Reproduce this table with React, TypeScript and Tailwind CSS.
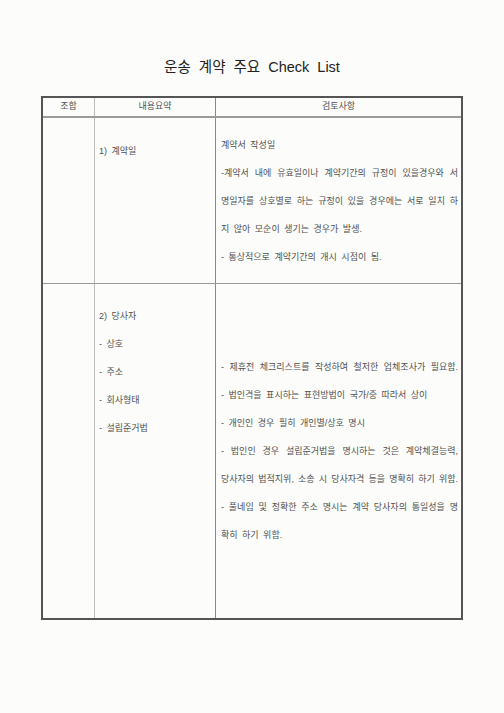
import React from 'react';

type Line = { text: string; justify?: boolean };

const row1Review: Line[] = [
    { text: '계약서 작성일' },
    { text: '-계약서 내에 유효일이나 계약기간의 규정이 있을경우와 서', justify: true },
    { text: '명일자를 상호별로 하는 규정이 있을 경우에는 서로 일치 하', justify: true },
    { text: '지 않아 모순이 생기는 경우가 발생.' },
    { text: '- 통상적으로 계약기간의 개시 시점이 됨.' },
];

const row2Review: Line[] = [
    { text: '- 제휴전 체크리스트를 작성하여 철저한 업체조사가 필요함.', justify: true },
    { text: '- 법인격을 표시하는 표현방법이 국가/중 따라서 상이' },
    { text: '- 개인인 경우 필히 개인별/상호 명시' },
    { text: '- 법인인 경우 설립준거법을 명시하는 것은 계약체결능력,', justify: true },
    { text: '당사자의 법적지위, 소송 시 당사자격 등을 명확히 하기 위함.', justify: true },
    { text: '- 풀네임 및 정확한 주소 명시는 계약 당사자의 통일성을 명', justify: true },
    { text: '확히 하기 위함.' },
];

const row2Summary = ['2) 당사자', '- 상호', '- 주소', '- 회사형태', '- 설립준거법'];

const ReviewLines: React.FC<{ lines: Line[] }> = ({ lines }) => (
    <div className="flex flex-col">
        {lines.map((l, i) => (
            <div
                key={i}
                className={
                    l.justify
                        ? 'h-[28px] leading-[28px] whitespace-nowrap [word-spacing:1px] text-justify [text-align-last:justify]'
                        : 'h-[28px] leading-[28px] whitespace-nowrap'
                }
            >
                {l.text}
            </div>
        ))}
    </div>
);

const App: React.FC = () => {
    return (
        <div className="w-[504px] h-[713px] bg-[#fcfdfb] text-[#505050] font-['Liberation_Sans','Noto_Sans_CJK_KR',sans-serif] flex flex-col">
            {/* Title */}
            <h1 className="mt-[57px] h-5 leading-5 text-center text-[14.5px] text-[#222] [word-spacing:4px]">
                운송 계약 주요 Check List
            </h1>

            {/* Check table */}
            <div className="mt-[19px] ml-[41px] w-[422px] border-2 border-[#555] text-[9px] [word-spacing:2px]">
                {/* Header */}
                <div className="grid grid-cols-[52px_121px_1fr] h-[20px] border-b-2 border-[#9a9a9a]">
                    <div className="border-r border-[#bbb] flex items-center justify-center">조합</div>
                    <div className="border-r border-[#888] flex items-center justify-center">내용요약</div>
                    <div className="flex items-center justify-center">검토사항</div>
                </div>

                {/* Row 1 */}
                <div className="grid grid-cols-[52px_121px_1fr] h-[166px] border-b border-[#999]">
                    <div className="border-r border-[#bbb]" />
                    <div className="border-r border-[#888] pl-1 pt-[19px]">
                        <div className="leading-[28px]">1) 계약일</div>
                    </div>
                    <div className="pl-[5px] pr-[3px] flex flex-col justify-center">
                        <ReviewLines lines={row1Review} />
                    </div>
                </div>

                {/* Row 2 */}
                <div className="grid grid-cols-[52px_121px_1fr] h-[334px]">
                    <div className="border-r border-[#bbb]" />
                    <div className="border-r border-[#888] pl-1 pt-[18px] flex flex-col">
                        {row2Summary.map((s) => (
                            <div key={s} className="h-[28px] leading-[28px]">
                                {s}
                            </div>
                        ))}
                    </div>
                    <div className="pl-[5px] pr-[3px] flex flex-col justify-center">
                        <ReviewLines lines={row2Review} />
                    </div>
                </div>
            </div>
        </div>
    );
};

export default App;
